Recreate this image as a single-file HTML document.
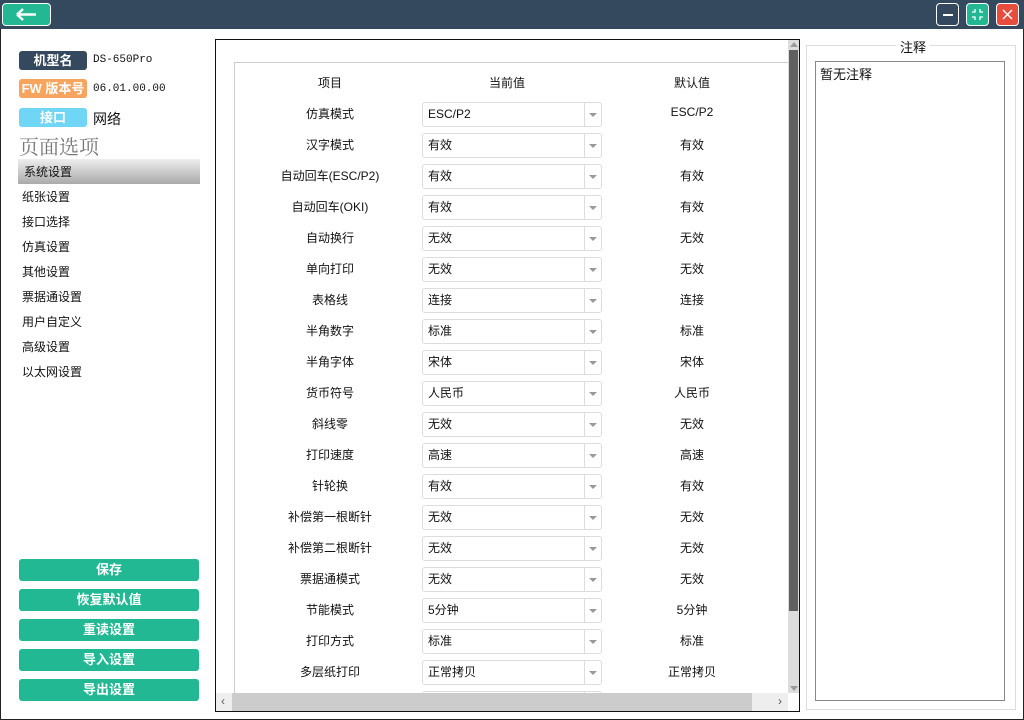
<!DOCTYPE html>
<html><head><meta charset="utf-8"><style>
*{box-sizing:border-box;margin:0;padding:0}
html,body{width:1024px;height:720px;overflow:hidden}
body{background:#fff;font-family:"Liberation Sans","Noto Sans CJK SC",sans-serif;font-size:12px;color:#111;position:relative}
.abs{position:absolute}
#top{left:0;top:0;width:1024px;height:29px;background:#34495e}
#frame{left:0;top:29px;width:1024px;height:691px;border:1px solid #222;border-top:none}
.tb{top:3px;height:23px;border:1px solid #fff;border-radius:4px}
.lab{left:19px;width:68px;height:19px;border-radius:3px;color:#fff;font-weight:bold;font-size:13px;text-align:center;line-height:19px}
.val{left:93px;font-family:"Liberation Mono","Noto Sans CJK SC",monospace;font-size:11px}
.menu{left:22px;font-size:12px}
.btn{left:19px;width:180px;height:22px;background:#22b893;border-radius:3px;color:#fff;font-weight:bold;font-size:13px;text-align:center;line-height:22px}
.it{width:200px;left:230px;text-align:center;font-size:12px}
.cb{left:206px;width:180px;height:25px;border:1px solid #ddd;border-radius:3px;font-size:12px;line-height:23px;padding-left:5px}
.cb:after{content:"";position:absolute;right:0;top:0;width:16px;height:23px;border-left:1px solid #ddd}
.cb i{position:absolute;right:4px;top:10px;border-left:4px solid transparent;border-right:4px solid transparent;border-top:4px solid #999}
.df{left:632px;width:120px;text-align:center;font-size:12px}
#clip{left:216px;top:40px;width:572px;height:653px;overflow:hidden}
</style></head><body>
<div class="abs" id="top"></div>
<div class="abs" id="frame"></div>
<div class="abs tb" style="left:2px;width:49px;background:#22b893;">
<svg width="49" height="21" viewBox="0 0 49 21"><path d="M14 10.5H33M14 10.5L20 5M14 10.5L20 16" stroke="#fff" stroke-width="2.5" fill="none"/></svg></div>
<div class="abs tb" style="left:936px;width:23px;background:#34495e"><div class="abs" style="left:6px;top:10px;width:10px;height:2px;background:#fff"></div></div>
<div class="abs tb" style="left:966px;width:23px;background:#22b893"><svg width="21" height="21"><path d="M8 5V8H5M13 5V8H16M8 16V13H5M13 16V13H16" stroke="#fff" stroke-width="1.3" fill="none"/></svg></div>
<div class="abs tb" style="left:996px;width:23px;background:#e74c3c"><svg width="21" height="21"><path d="M6 6L15 15M15 6L6 15" stroke="#fff" stroke-width="1.5"/></svg></div>

<div class="abs lab" style="top:51px;background:#34495e">机型名</div>
<div class="abs val" style="top:54px">DS-650Pro</div>
<div class="abs lab" style="top:79px;background:#f7a45e">FW 版本号</div>
<div class="abs val" style="top:83px">06.01.00.00</div>
<div class="abs lab" style="top:108px;background:#6fd6f6">接口</div>
<div class="abs" style="left:93px;top:109px;font-size:14px">网络</div>
<div class="abs" style="left:19px;top:131px;font-size:20px;color:#777;font-family:'Liberation Serif','Noto Serif CJK SC',serif">页面选项</div>
<div class="abs" style="left:18px;top:159px;width:182px;height:25px;background:linear-gradient(#eee,#aaa)"></div>
<div class="abs menu" style="top:163px;left:24px">系统设置</div>
<div class="abs menu" style="top:188px">纸张设置</div>
<div class="abs menu" style="top:213px">接口选择</div>
<div class="abs menu" style="top:238px">仿真设置</div>
<div class="abs menu" style="top:263px">其他设置</div>
<div class="abs menu" style="top:288px">票据通设置</div>
<div class="abs menu" style="top:313px">用户自定义</div>
<div class="abs menu" style="top:338px">高级设置</div>
<div class="abs menu" style="top:363px">以太网设置</div>
<div class="abs btn" style="top:559px">保存</div>
<div class="abs btn" style="top:589px">恢复默认值</div>
<div class="abs btn" style="top:619px">重读设置</div>
<div class="abs btn" style="top:649px">导入设置</div>
<div class="abs btn" style="top:679px">导出设置</div>

<div class="abs" style="left:215px;top:39px;width:585px;height:673px;border:1px solid #111"></div>
<div class="abs" id="clip">
<div class="abs" style="left:18px;top:22px;width:560px;height:640px;border:1px solid #ccc;border-right:none;border-bottom:none"></div>
<div id="rows"></div>
</div>
<div class="abs" style="left:788px;top:40px;width:11px;height:653px;background:#ddd"></div>
<div class="abs" style="left:789px;top:50px;width:9px;height:561px;background:#606060"></div>
<div class="abs" style="left:790px;top:42px;border-left:4px solid transparent;border-right:4px solid transparent;border-bottom:5px solid #999"></div>
<div class="abs" style="left:790px;top:686px;border-left:4px solid transparent;border-right:4px solid transparent;border-top:5px solid #999"></div>
<div class="abs" style="left:216px;top:693px;width:572px;height:18px;background:#eee"></div>
<div class="abs" style="left:232px;top:693px;width:520px;height:18px;background:#ccc"></div>
<div class="abs" style="left:221px;top:694px;font-size:12px;color:#555">‹</div>
<div class="abs" style="left:778px;top:694px;font-size:12px;color:#555">›</div>

<script>
var r=[["仿真模式","ESC/P2"],["汉字模式","有效"],["自动回车(ESC/P2)","有效"],["自动回车(OKI)","有效"],["自动换行","无效"],["单向打印","无效"],["表格线","连接"],["半角数字","标准"],["半角字体","宋体"],["货币符号","人民币"],["斜线零","无效"],["打印速度","高速"],["针轮换","有效"],["补偿第一根断针","无效"],["补偿第二根断针","无效"],["票据通模式","无效"],["节能模式","5分钟"],["打印方式","标准"],["多层纸打印","正常拷贝"],["",""]];
var h='<div class="abs it" style="top:34px;left:14px">项目</div><div class="abs" style="left:206px;width:170px;top:34px;text-align:center">当前值</div><div class="abs df" style="top:34px;left:416px">默认值</div>';
r.forEach(function(x,i){var y=65+i*31;if(i==19){h+='<div class="abs cb" style="top:'+(y-3)+'px;height:15px"></div>';return;}
h+='<div class="abs it" style="left:14px;top:'+y+'px">'+x[0]+'</div><div class="abs cb" style="top:'+(y-3)+'px">'+x[1]+'<i></i></div><div class="abs df" style="left:416px;top:'+y+'px">'+x[1]+'</div>';});
document.getElementById("rows").innerHTML=h;
</script>

<div class="abs" style="left:806px;top:45px;width:210px;height:665px;border:1px solid #ddd"></div>
<div class="abs" style="left:896px;top:37px;background:#fff;padding:0 4px;font-size:13px">注释</div>
<div class="abs" style="left:815px;top:61px;width:190px;height:640px;border:1px solid #888"></div>
<div class="abs" style="left:820px;top:64px;font-size:13px">暂无注释</div>
</body></html>
